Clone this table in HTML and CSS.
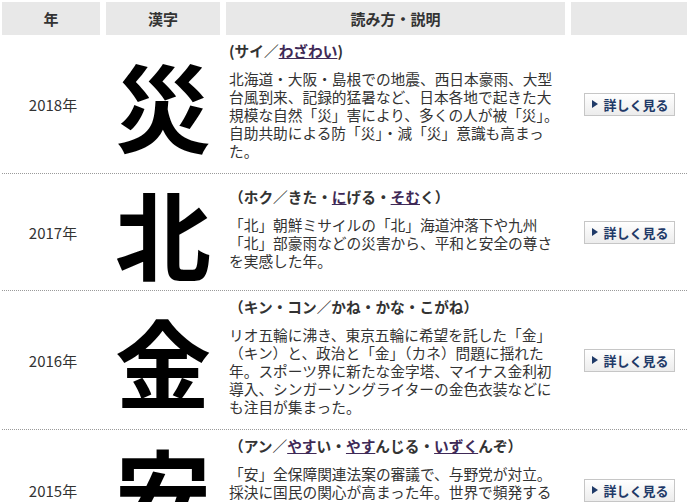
FILE: index.html
```html
<!DOCTYPE html>
<html lang="ja">
<head>
<meta charset="utf-8">
<title>今年の漢字</title>
<link rel="stylesheet" href="styles.css">
</head>
<body>
<div class="table">
  <div class="head">
    <div class="hcell">年</div>
    <div class="hcell">漢字</div>
    <div class="hcell">読み方・説明</div>
    <div class="hcell"></div>
  </div>

  <div class="row">
    <div class="year">2018年</div>
    <div class="kanji">災</div>
    <div class="desc">
      <div class="reading">(サイ／<a class="rd">わざわい</a>)</div>
      <p class="text">北海道・大阪・島根での地震、西日本豪雨、大型台風到来、記録的猛暑など、日本各地で起きた大規模な自然「災」害により、多くの人が被「災」。自助共助による防「災」・減「災」意識も高まった。</p>
    </div>
    <div class="more"><span class="btn"><span class="tri"></span>詳しく見る</span></div>
  </div>

  <div class="row">
    <div class="year">2017年</div>
    <div class="kanji">北</div>
    <div class="desc">
      <div class="reading">（ホク／きた・<a class="rd">に</a>げる・<a class="rd">そむ</a>く）</div>
      <p class="text">「北」朝鮮ミサイルの「北」海道沖落下や九州「北」部豪雨などの災害から、平和と安全の尊さを実感した年。</p>
    </div>
    <div class="more"><span class="btn"><span class="tri"></span>詳しく見る</span></div>
  </div>

  <div class="row">
    <div class="year">2016年</div>
    <div class="kanji">金</div>
    <div class="desc">
      <div class="reading">（キン・コン／かね・かな・こがね）</div>
      <p class="text">リオ五輪に沸き、東京五輪に希望を託した「金」（キン）と、政治と「金」（カネ）問題に揺れた年。スポーツ界に新たな金字塔、マイナス金利初導入、シンガーソングライターの金色衣装などにも注目が集まった。</p>
    </div>
    <div class="more"><span class="btn"><span class="tri"></span>詳しく見る</span></div>
  </div>

  <div class="row">
    <div class="year">2015年</div>
    <div class="kanji">安</div>
    <div class="desc">
      <div class="reading">（アン／<a class="rd">やす</a>い・<a class="rd">やす</a>んじる・<a class="rd">いずく</a>んぞ）</div>
      <p class="text">「安」全保障関連法案の審議で、与野党が対立。採決に国民の関心が高まった年。世界で頻発するテロ事件や異常気象などが人々を不「安」にさせ、「安」心・「安」全な暮らしを願った年。</p>
    </div>
    <div class="more"><span class="btn"><span class="tri"></span>詳しく見る</span></div>
  </div>
</div>
</body>
</html>
```

FILE: styles.css
```css
html, body {
  margin: 0;
  padding: 0;
  background: #fff;
  overflow: hidden;
}

body {
  font-family: "Noto Sans CJK JP", "Noto Sans", sans-serif;
  color: #333;
}

.table {
  width: 685px;
  padding: 2px 0 0 2px;
}

.head,
.row {
  display: grid;
  grid-template-columns: 98px 114px 339px 116px;
  column-gap: 6px;
}

.hcell {
  background: #e8e8e8;
  height: 33px;
  line-height: 33px;
  text-align: center;
  font-size: 15px;
  font-weight: 700;
  color: #333;
}

.row {
  align-items: center;
  border-bottom: 1px dotted #9a9a9a;
}

.year {
  text-align: center;
  font-size: 15px;
  color: #333;
  padding-left: 4px;
}

.kanji {
  height: 100px;
  padding: 8px 0;
  font-size: 96px;
  line-height: 100px;
  font-weight: 700;
  text-align: center;
  color: #000;
}

.desc {
  padding: 7px 3px;
}

.reading {
  font-size: 14.7px;
  line-height: 18px;
  font-weight: 700;
  color: #333;
  margin-bottom: 10px;
  white-space: nowrap;
}

.rd {
  color: #3f2a57;
  text-decoration: underline;
}

.text {
  margin: 0 0 6px 0;
  font-size: 14.7px;
  line-height: 18px;
  color: #333;
  line-break: strict;
}

.more {
  display: flex;
  justify-content: center;
}

.btn {
  display: flex;
  align-items: center;
  width: 89px;
  height: 21px;
  border: 1px solid #c6c6c6;
  background: linear-gradient(#ffffff, #ececec);
  color: #1f3a68;
  font-size: 13px;
  font-weight: 700;
  box-sizing: content-box;
}

.tri {
  width: 0;
  height: 0;
  border-top: 4px solid transparent;
  border-bottom: 4px solid transparent;
  border-left: 6px solid #1f3a68;
  margin: 0 6px 0 7px;
}
```
